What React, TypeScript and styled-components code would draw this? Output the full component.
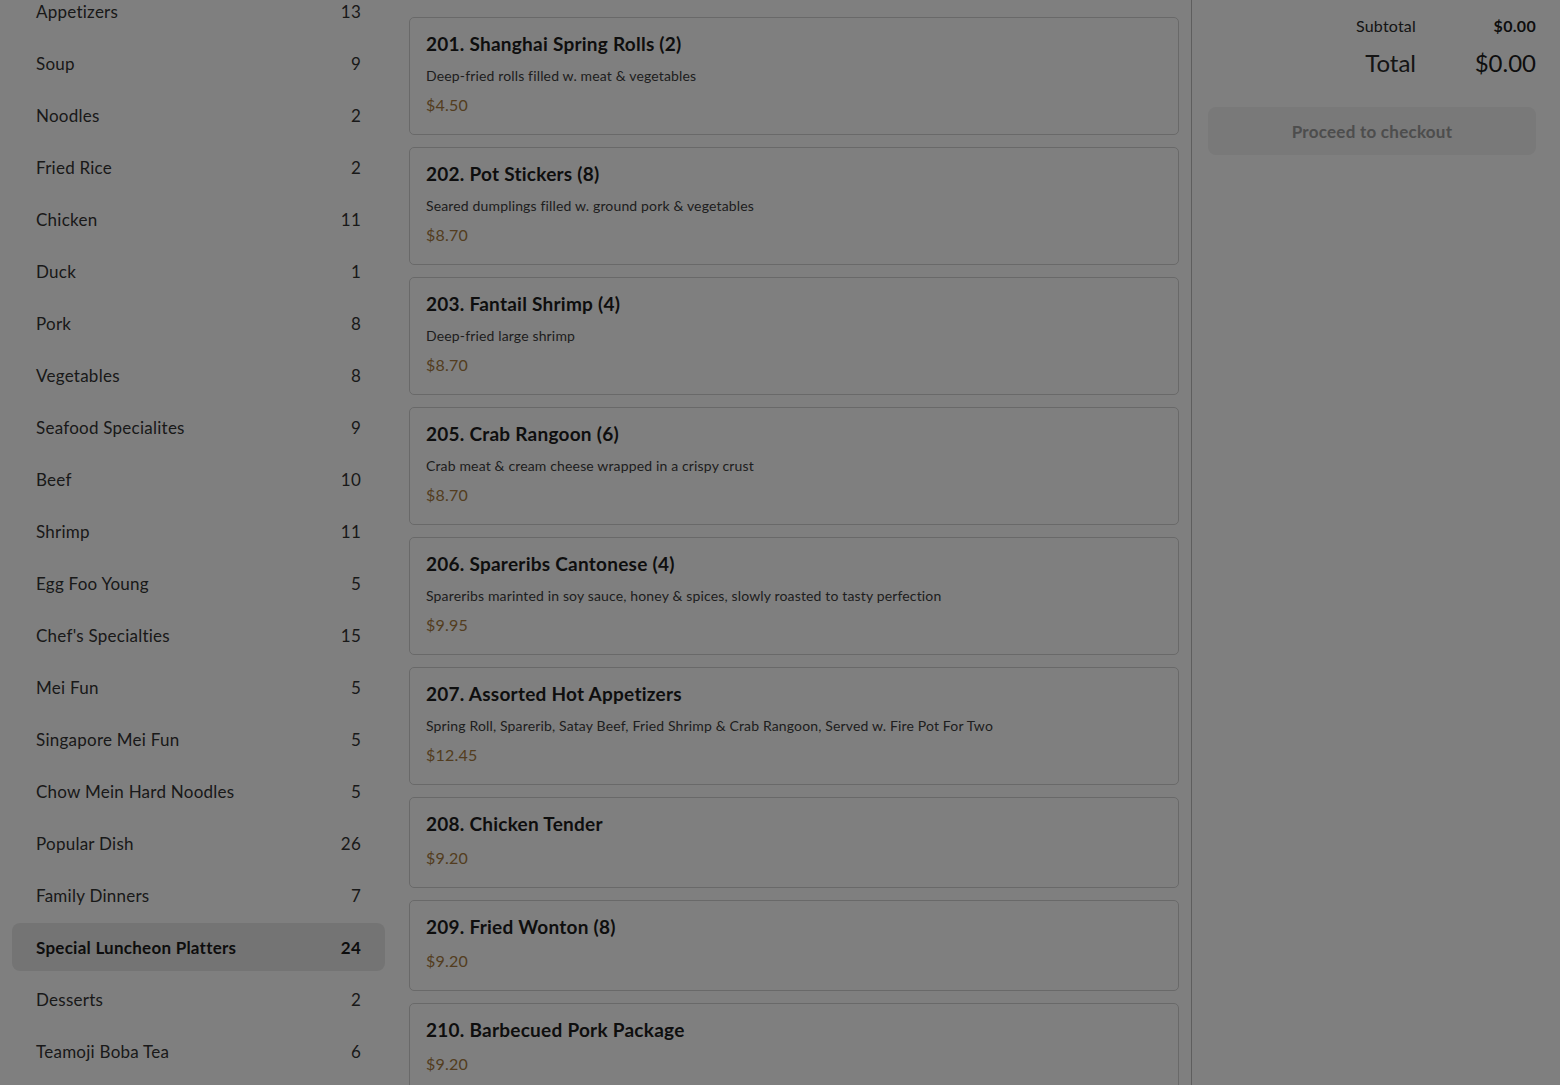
import React from 'react';
import styled, { createGlobalStyle } from 'styled-components';

interface Category {
  name: string;
  count: number;
}

interface MenuItemData {
  title: string;
  description?: string;
  price: number;
}

const categories: Category[] = [
  { name: 'Appetizers', count: 13 },
  { name: 'Soup', count: 9 },
  { name: 'Noodles', count: 2 },
  { name: 'Fried Rice', count: 2 },
  { name: 'Chicken', count: 11 },
  { name: 'Duck', count: 1 },
  { name: 'Pork', count: 8 },
  { name: 'Vegetables', count: 8 },
  { name: 'Seafood Specialites', count: 9 },
  { name: 'Beef', count: 10 },
  { name: 'Shrimp', count: 11 },
  { name: 'Egg Foo Young', count: 5 },
  { name: "Chef's Specialties", count: 15 },
  { name: 'Mei Fun', count: 5 },
  { name: 'Singapore Mei Fun', count: 5 },
  { name: 'Chow Mein Hard Noodles', count: 5 },
  { name: 'Popular Dish', count: 26 },
  { name: 'Family Dinners', count: 7 },
  { name: 'Special Luncheon Platters', count: 24 },
  { name: 'Desserts', count: 2 },
  { name: 'Teamoji Boba Tea', count: 6 },
];

const items: MenuItemData[] = [
  { title: '201. Shanghai Spring Rolls (2)', description: 'Deep-fried rolls filled w. meat & vegetables', price: 4.5 },
  { title: '202. Pot Stickers (8)', description: 'Seared dumplings filled w. ground pork & vegetables', price: 8.7 },
  { title: '203. Fantail Shrimp (4)', description: 'Deep-fried large shrimp', price: 8.7 },
  { title: '205. Crab Rangoon (6)', description: 'Crab meat & cream cheese wrapped in a crispy crust', price: 8.7 },
  { title: '206. Spareribs Cantonese (4)', description: 'Spareribs marinted in soy sauce, honey & spices, slowly roasted to tasty perfection', price: 9.95 },
  { title: '207. Assorted Hot Appetizers', description: 'Spring Roll, Sparerib, Satay Beef, Fried Shrimp & Crab Rangoon, Served w. Fire Pot For Two', price: 12.45 },
  { title: '208. Chicken Tender', price: 9.2 },
  { title: '209. Fried Wonton (8)', price: 9.2 },
  { title: '210. Barbecued Pork Package', price: 9.2 },
];

const GlobalStyle = createGlobalStyle`
  html, body {
    margin: 0;
    padding: 0;
    height: 100%;
    overflow: hidden;
    background: #ffffff;
  }
  body {
    font-family: Lato, "Open Sans", sans-serif;
    color: #222222;
  }
  * {
    box-sizing: border-box;
  }
`;

const Page = styled.div`
  display: grid;
  grid-template-columns: 397px 1fr 369px;
  height: 1085px;
  overflow: hidden;
`;

const Sidebar = styled.nav`
  overflow: hidden;
`;

const CategoryList = styled.ul`
  list-style: none;
  margin: -13px 0 0 0;
  padding: 0 12px;
  display: flex;
  flex-direction: column;
  gap: 4px;
`;

const CategoryRow = styled.li<{ $active?: boolean }>`
  display: flex;
  align-items: center;
  justify-content: space-between;
  height: 48px;
  padding: 0 24px;
  border-radius: 8px;
  font-size: 17px;
  letter-spacing: 0.25px;
  font-weight: ${p => (p.$active ? 700 : 400)};
  color: ${p => (p.$active ? '#1a1a1a' : '#333333')};
  background: ${p => (p.$active ? '#e9e9e9' : 'transparent')};
  cursor: pointer;
`;

const Main = styled.main`
  overflow: hidden;
  padding: 17px 12px 0 12px;
  display: flex;
  flex-direction: column;
  gap: 12px;
`;

const Card = styled.div`
  border: 1px solid #d2d2d2;
  border-radius: 5px;
  padding: 14px 16px 18px 16px;
  background: #ffffff;
  flex-shrink: 0;
`;

const ItemTitle = styled.h3`
  margin: 0;
  font-size: 19px;
  line-height: 24px;
  letter-spacing: 0.25px;
  font-weight: 700;
  color: #1c1c1c;
`;

const ItemDescription = styled.p`
  margin: 10px 0 0 0;
  font-size: 14px;
  line-height: 20px;
  letter-spacing: 0.15px;
  color: #3c3c3c;
`;

const ItemPrice = styled.div<{ $tight?: boolean }>`
  margin-top: ${p => (p.$tight ? '8px' : '11px')};
  font-size: 16px;
  line-height: 22px;
  letter-spacing: 0.2px;
  color: #a67a40;
`;

const Cart = styled.aside`
  border-left: 1px solid #bdbdbd;
  padding: 15px 24px 0 16px;
`;

const Totals = styled.div`
  display: grid;
  grid-template-columns: 1fr 120px;
  align-items: center;
  row-gap: 9px;
`;

const TotalLabel = styled.div<{ $big?: boolean }>`
  text-align: right;
  font-size: ${p => (p.$big ? '24px' : '16px')};
  line-height: ${p => (p.$big ? '34px' : '22px')};
  letter-spacing: ${p => (p.$big ? '0' : '0.2px')};
  color: #2a2a2a;
`;

const TotalValue = styled.div<{ $big?: boolean }>`
  text-align: right;
  font-size: ${p => (p.$big ? '24px' : '16px')};
  line-height: ${p => (p.$big ? '34px' : '22px')};
  letter-spacing: ${p => (p.$big ? '0' : '0.3px')};
  font-weight: ${p => (p.$big ? 400 : 700)};
  color: #1c1c1c;
`;

const CheckoutButton = styled.button`
  display: block;
  width: 100%;
  height: 48px;
  margin-top: 27px;
  border: none;
  border-radius: 8px;
  background: #f2f2f2;
  color: #9a9a9a;
  font-family: inherit;
  font-size: 17px;
  letter-spacing: 0.25px;
  font-weight: 700;
  cursor: not-allowed;
`;

const Backdrop = styled.div`
  position: fixed;
  inset: 0;
  background: rgba(0, 0, 0, 0.5);
  z-index: 100;
`;

const formatPrice = (v: number) => `$${v.toFixed(2)}`;

const App: React.FC = () => {
  const activeCategory = 'Special Luncheon Platters';

  return (
    <>
      <GlobalStyle />
      <Page>
        <Sidebar>
          <CategoryList>
            {categories.map(c => (
              <CategoryRow key={c.name} $active={c.name === activeCategory}>
                <span>{c.name}</span>
                <span>{c.count}</span>
              </CategoryRow>
            ))}
          </CategoryList>
        </Sidebar>

        <Main>
          {items.map(item => (
            <Card key={item.title}>
              <ItemTitle>{item.title}</ItemTitle>
              {item.description && <ItemDescription>{item.description}</ItemDescription>}
              <ItemPrice $tight={!!item.description}>{formatPrice(item.price)}</ItemPrice>
            </Card>
          ))}
        </Main>

        <Cart>
          <Totals>
            <TotalLabel>Subtotal</TotalLabel>
            <TotalValue>$0.00</TotalValue>
            <TotalLabel $big>Total</TotalLabel>
            <TotalValue $big>$0.00</TotalValue>
          </Totals>
          <CheckoutButton disabled>Proceed to checkout</CheckoutButton>
        </Cart>
      </Page>
      <Backdrop />
    </>
  );
};

export default App;
